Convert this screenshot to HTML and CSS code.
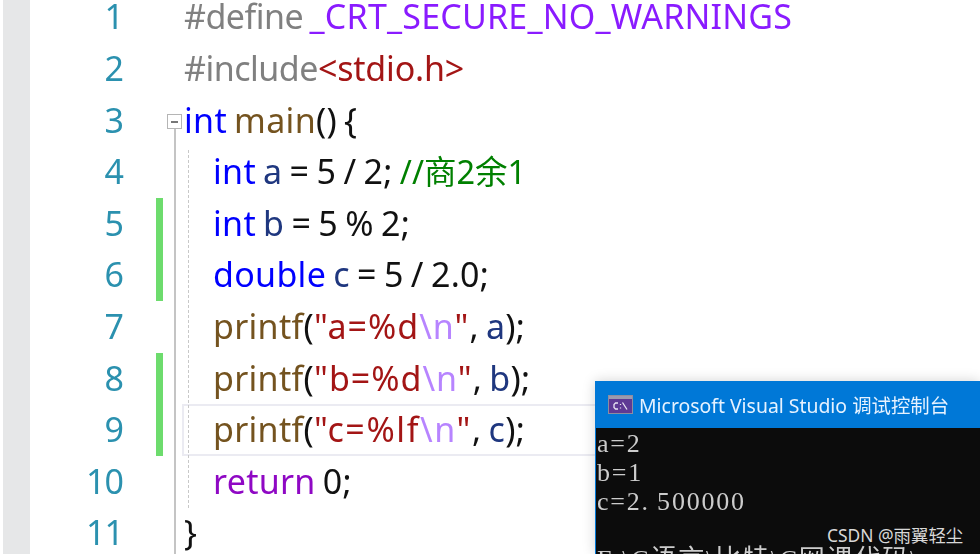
FILE: index.html
```html
<!DOCTYPE html>
<html lang="zh">
<head>
<meta charset="utf-8">
<title>Editor</title>
<link rel="stylesheet" href="styles.css">
</head>
<body>
<div class="screen">
  <div class="rail"></div>
  <div class="editor">
    <div class="row"><span class="num">1</span><span class="mark"></span><code class="code"><span class="pp">#define </span><span class="mac">_CRT_SECURE_NO_WARNINGS</span></code></div>
    <div class="row"><span class="num">2</span><span class="mark"></span><code class="code"><span class="pp">#include</span><span class="inc">&lt;stdio.h&gt;</span></code></div>
    <div class="row"><span class="num">3</span><span class="mark"></span><code class="code"><span class="kw">int</span> <span class="fn">main</span>() {</code></div>
    <div class="row"><span class="num">4</span><span class="mark"></span><code class="code in"><span class="kw">int</span> <span class="var">a</span> = 5 / 2; <span class="com">//商2余1</span></code></div>
    <div class="row"><span class="num">5</span><span class="mark on"></span><code class="code in"><span class="kw">int</span> <span class="var">b</span> = 5 % 2;</code></div>
    <div class="row"><span class="num">6</span><span class="mark on"></span><code class="code in"><span class="kw">double</span> <span class="var">c</span> = 5 / 2.0;</code></div>
    <div class="row"><span class="num">7</span><span class="mark"></span><code class="code in"><span class="fn">printf</span>(<span class="str">"a=%d<span class="esc">\n</span>"</span>, <span class="var">a</span>);</code></div>
    <div class="row"><span class="num">8</span><span class="mark on"></span><code class="code in"><span class="fn">printf</span>(<span class="str">"b=%d<span class="esc">\n</span>"</span>, <span class="var">b</span>);</code></div>
    <div class="row current"><span class="num">9</span><span class="mark on"></span><code class="code in"><span class="fn">printf</span>(<span class="str wide">"c=%lf<span class="esc">\n</span>"</span>, <span class="var">c</span>);</code></div>
    <div class="row"><span class="num">10</span><span class="mark"></span><code class="code in"><span class="ret">return</span> 0;</code></div>
    <div class="row"><span class="num">11</span><span class="mark"></span><code class="code">}</code></div>
  </div>
  <div class="fold"><span class="fold-dash"></span></div>
  <div class="fold-line"></div>
  <div class="guide"></div>
  <section class="console">
    <header class="title">
      <svg class="icon" width="25" height="19" viewBox="0 0 25 19" aria-hidden="true">
        <rect x="0.5" y="0.5" width="24" height="18" fill="#5e3a94" stroke="#8d8da0"/>
        <rect x="1" y="1" width="23" height="3" fill="#9a9ab0"/>
        <path d="M10 8H7.5L6 9.5v3L7.5 14H10M12.5 9v1M12.5 12.5v1M14.5 7.5l4.5 7" fill="none" stroke="#e8e4f2" stroke-width="1.3"/>
      </svg>
      <span>Microsoft Visual Studio 调试控制台</span>
    </header>
    <pre class="output">a=2
b=1
c=2<span class="dot">.</span>500000

F:\C语言\比特\C网课代码\</pre>
  </section>
  <div class="mark-text">CSDN @雨翼轻尘</div>
</div>
</body>
</html>
```
FILE: styles.css
```css
* { box-sizing: border-box; }
html, body { margin: 0; padding: 0; background: #fff; }
.screen {
  position: relative;
  width: 980px;
  height: 554px;
  overflow: hidden;
  display: flex;
  background: #fff;
}
.rail {
  flex: none;
  width: 27px;
  margin-left: 3px;
  background: #e6e7e8;
}
.editor {
  flex: 1;
  margin-top: -8.6px;
  filter: blur(0.35px);
}
.row {
  display: flex;
  height: 51.6px;
  line-height: 51.6px;
  font-family: "Noto Sans", sans-serif;
  font-size: 34px;
  color: #111;
}
.num {
  flex: none;
  width: 93px;
  text-align: right;
  color: #2b91af;
  letter-spacing: -1px;
}
.mark { flex: none; width: 7px; margin-left: 33px; }
.mark.on { background: #6ddc6d; }
.code {
  flex: 1;
  margin-left: 21px;
  font: inherit;
  white-space: pre;
  letter-spacing: 0.3px;
  word-spacing: -2px;
}
.code.in { padding-left: 30px; margin-left: 20px; }
.current .code {
  margin-left: 19px;
  padding-left: 29px;
  border: solid #ebebf2;
  border-width: 2px 0 2px 2px;
  line-height: 47.6px;
}
.pp { color: #808080; letter-spacing: -0.5px; }
.mac { color: #8a1bff; letter-spacing: 0.2px; }
.inc { color: #a31515; letter-spacing: -0.2px; }
.str { color: #a31515; letter-spacing: 1px; }
.str.wide { letter-spacing: 1.6px; }
.esc { color: #b784ff; }
.kw { color: #0000ff; }
.fn { color: #74531f; }
.var { color: #1f377f; }
.com { color: #008000; font-family: "Noto Sans", "Noto Sans CJK SC", sans-serif; font-size: 32.5px; letter-spacing: 0; }
.ret { color: #8f08c4; }
.fold {
  position: absolute;
  left: 167px;
  top: 114px;
  width: 15px;
  height: 15px;
  border: 1px solid #b5b5b5;
  background: #fff;
  display: flex;
  align-items: center;
  justify-content: center;
}
.fold-dash { width: 7px; height: 2px; background: #777; }
.fold-line {
  position: absolute;
  left: 174px;
  top: 129px;
  bottom: 0;
  width: 2px;
  background: #c4c4c4;
}
.guide {
  position: absolute;
  left: 188px;
  top: 150px;
  height: 358px;
  border-left: 1px dashed #c8c8c8;
}
.console {
  position: absolute;
  left: 595px;
  top: 381px;
  width: 385px;
  height: 173px;
  background: #0c0c0c;
  border-left: 1px solid #0078d7;
  box-shadow: 0 0 12px rgba(0, 0, 0, 0.18);
  overflow: hidden;
}
.title {
  height: 47px;
  background: #0078d7;
  display: flex;
  align-items: center;
  gap: 6px;
  padding-left: 12px;
  color: #e6f2ff;
  font-family: "Noto Sans", "Noto Sans CJK SC", sans-serif;
  font-size: 19.4px;
  filter: blur(0.3px);
}
.icon { flex: none; }
.output {
  margin: 0;
  padding: 1px 0 0 1px;
  color: #cccccc;
  font-family: "Liberation Serif", "Noto Sans CJK SC", serif;
  font-size: 26px;
  line-height: 29px;
  letter-spacing: 1.8px;
  filter: blur(0.35px);
}
.dot { letter-spacing: 9px; }
.mark-text {
  position: absolute;
  left: 827px;
  top: 524px;
  color: #d8d8d8;
  font-family: "Noto Sans", "Noto Sans CJK SC", sans-serif;
  font-size: 17.4px;
  line-height: 22px;
}
```
